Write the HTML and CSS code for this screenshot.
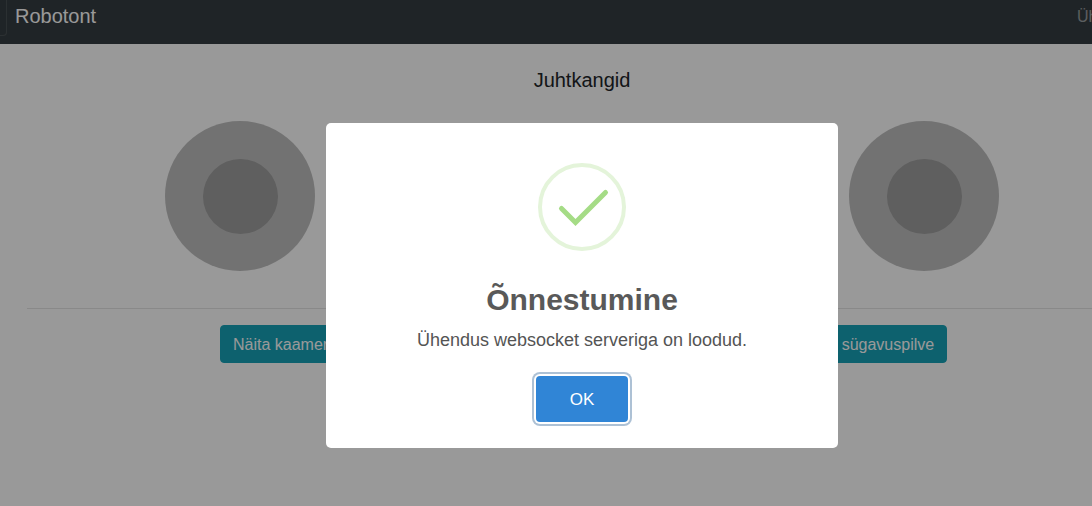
FILE: index.html
```html
<!DOCTYPE html>
<html lang="et">
<head>
<meta charset="utf-8">
<title>Robotont</title>
<link rel="stylesheet" href="styles.css">
</head>
<body>
<div class="page">
  <header class="navbar">
    <button class="toggler" type="button" aria-label="Menüü"></button>
    <a class="brand" href="#">Robotont</a>
    <nav class="nav"><a class="nav-link" href="#">Ühendus</a></nav>
  </header>
  <main class="container">
    <h1 class="heading">Juhtkangid</h1>
    <div class="joysticks">
      <div class="joystick"><div class="knob"></div></div>
      <div class="joystick"><div class="knob"></div></div>
    </div>
    <hr class="divider">
    <div class="actions">
      <div class="action"><button class="btn-info" type="button">Näita kaamerapilti</button></div>
      <div class="action"><button class="btn-info" type="button">Näita sügavuspilve</button></div>
    </div>
  </main>
</div>
<div class="overlay">
  <div class="modal" role="dialog" aria-modal="true" aria-labelledby="modal-title">
    <svg class="success-icon" viewBox="0 0 88 88" aria-hidden="true">
      <circle cx="44" cy="44" r="42" fill="none" stroke="#e4f4da" stroke-width="4"/>
      <path d="M23.500 45.500 L37.500 59.500 L67.500 29.500" fill="none" stroke="#a5dc86" stroke-width="5" stroke-linecap="round" stroke-linejoin="miter"/>
    </svg>
    <h2 class="modal-title" id="modal-title">Õnnestumine</h2>
    <p class="modal-text">Ühendus websocket serveriga on loodud.</p>
    <button class="confirm" type="button">OK</button>
  </div>
</div>
</body>
</html>
```
FILE: styles.css
```css
* {
  box-sizing: border-box;
}

body {
  margin: 0;
  min-height: 100vh;
  overflow: hidden;
  background: #fff;
  color: #212529;
  font: 16px/24px "Liberation Sans", Arial, sans-serif;
}

/* The page runs past the right edge of the window. */
.page,
.overlay {
  width: calc(100% + 72px);
}

.navbar {
  display: flex;
  align-items: flex-start;
  padding-bottom: 8px;
  background: #353d41;
}

.toggler {
  width: 7px;
  height: 36px;
  padding: 0;
  border: 1px solid rgba(255, 255, 255, 0.1);
  border-width: 0 1px 1px 0;
  border-radius: 0 0 4px 0;
  background: none;
}

.brand {
  margin-left: 8px;
  padding-top: 1px;
  color: #fff;
  font-size: 20px;
  line-height: 30px;
  text-decoration: none;
}

.nav {
  width: 87px;
  margin-left: auto;
  padding-top: 5px;
}

.nav-link {
  color: rgba(255, 255, 255, 0.5);
  text-decoration: none;
}

.container {
  max-width: 1140px;
  margin: 0 auto;
  padding: 24px 15px;
}

.heading {
  margin: 0;
  color: #212529;
  font-size: 20px;
  font-weight: 400;
  line-height: 24px;
  text-align: center;
}

.joysticks {
  display: flex;
  justify-content: space-between;
  margin-top: 29px;
  padding: 0 138px;
}

.joystick {
  display: grid;
  place-items: center;
  width: 150px;
  height: 150px;
  border-radius: 50%;
  background: #bfbfbf;
}

.knob {
  width: 75px;
  height: 75px;
  border-radius: 50%;
  background: #9e9e9e;
}

.divider {
  margin: 37px 0 16px;
  border: 0;
  border-top: 1px solid rgba(0, 0, 0, 0.1);
}

.actions {
  display: grid;
  grid-template-columns: 1fr 1fr;
  margin: 0 -15px;
}

.action {
  text-align: center;
}

.btn-info {
  padding: 7px 12px 5px;
  border: 1px solid #17a2b8;
  border-radius: 4px;
  background: #17a2b8;
  color: #fff;
  font: inherit;
}

.overlay {
  position: absolute;
  top: 0;
  left: 0;
  display: flex;
  align-items: flex-start;
  justify-content: center;
  min-height: 100vh;
  padding-top: 123px;
  background: rgba(0, 0, 0, 0.4);
}

.modal {
  display: flex;
  flex-direction: column;
  align-items: center;
  width: 512px;
  padding: 40px 20px 26px;
  border-radius: 5px;
  background: #fff;
}

.success-icon {
  width: 88px;
  height: 88px;
}

.modal-title {
  margin: 32px 0 12px;
  color: #595959;
  font-size: 30px;
  font-weight: 700;
  line-height: 34px;
}

.modal-text {
  margin: 0 0 24px;
  color: #545454;
  font-size: 18px;
  line-height: 23px;
}

.confirm {
  width: 92px;
  height: 46px;
  padding: 2px 0 0;
  border: 0;
  border-radius: 4px;
  background: #3085d6;
  box-shadow: 0 0 0 2px #fff, 0 0 0 4px rgba(50, 100, 150, 0.4);
  color: #fff;
  font: 17px/20px "Liberation Sans", Arial, sans-serif;
}
```
